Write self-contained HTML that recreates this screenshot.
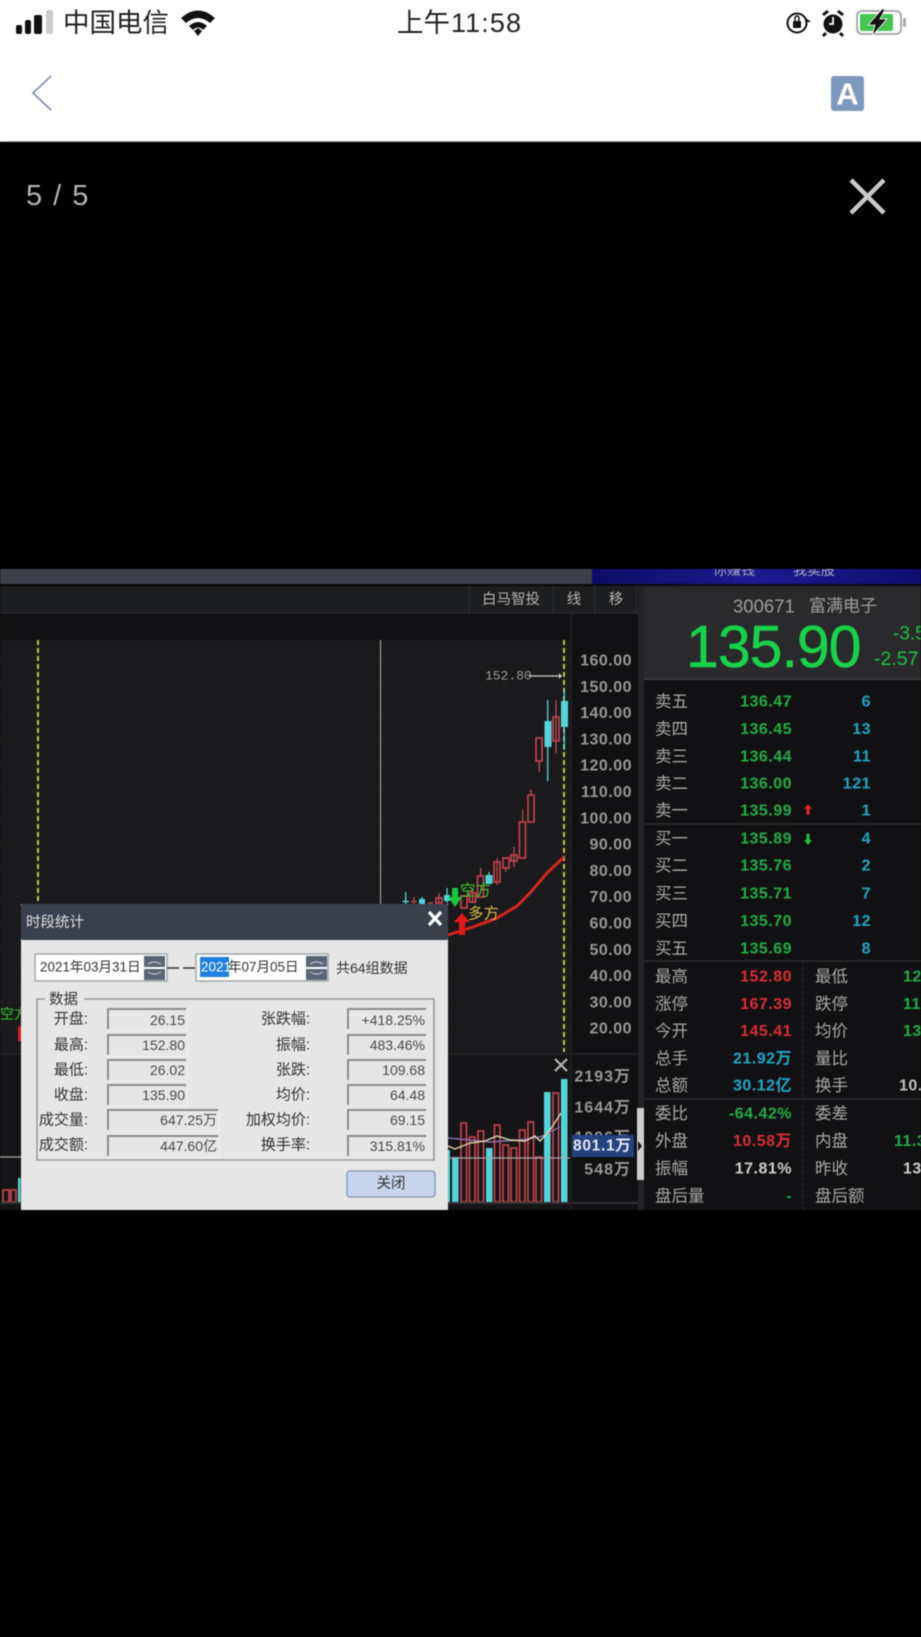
<!DOCTYPE html>
<html lang="zh"><head><meta charset="utf-8"><title>5 / 5</title>
<style>
html,body{margin:0;padding:0;background:linear-gradient(#fff 142px,#000 142px);width:921px;height:1637px;overflow:hidden}
svg{display:block;position:absolute;left:0;top:0;filter:blur(.4px)}
text{font-family:"Liberation Sans","Noto Sans CJK SC",sans-serif;dominant-baseline:central}
.cn{font-size:16.5px;fill:#a8a8a8}
.n{font-size:16px;font-weight:bold;letter-spacing:.5px;text-anchor:end}
.g{fill:#1fae45}.b{fill:#20a6c6}.r{fill:#d92c36}
.ax{font-size:16px;font-weight:bold;letter-spacing:.5px;text-anchor:end;fill:#979797}
.av{font-size:16px;font-weight:bold;letter-spacing:1px;text-anchor:end;fill:#979797}
.dl{font-size:15px;fill:#333;text-anchor:end}
.dv{font-size:14px;fill:#4a4a4a;text-anchor:end}
.rb{fill:none;stroke:#b9404a;stroke-width:1.8}
.w{stroke:#b5454c;stroke-width:1.4}
.tb{fill:#52d4d8}
.tw{stroke:#52d4d8;stroke-width:1.3}
</style></head><body>
<svg width="921" height="1637" viewBox="0 0 921 1637" xmlns="http://www.w3.org/2000/svg">
<defs><linearGradient id="bl" x1="0" x2="1" y1="0" y2="0"><stop offset="0" stop-color="#0c0c66"/><stop offset=".5" stop-color="#1c1c90"/><stop offset="1" stop-color="#0e0e70"/></linearGradient>
<clipPath id="top"><rect x="592" y="569" width="329" height="15"/></clipPath></defs>
<rect width="921" height="1637" fill="#000"/>
<!-- header -->
<rect width="921" height="142" fill="#fff"/>
<rect y="141" width="921" height="1" fill="#aaa"/>
<rect x="16" y="25" width="6" height="9" rx="2" fill="#111"/>
<rect x="25" y="20" width="6" height="14" rx="2" fill="#111"/>
<rect x="34" y="15" width="8" height="19" rx="2" fill="#111"/>
<rect x="46" y="10" width="7" height="24" rx="2" fill="#ccc"/>
<text x="63" y="23" style="font-size:26.5px;fill:#222">中国电信</text>
<path d="M181 18 Q198 3 215 18 L210 23 Q198 13 186 23Z M189 26 Q198 18 207 26 L203 30 Q198 25 193 30Z M194 31 L198 28 L202 31 L198 36Z" fill="#111"/>
<text x="397" y="23" style="font-size:26.5px;fill:#222">上午</text>
<text x="451" y="23" style="font-size:27px;fill:#222;letter-spacing:1.1px">11:58</text>
<circle cx="797" cy="23" r="9.5" fill="none" stroke="#111" stroke-width="2"/>
<rect x="793" y="21" width="8" height="7" rx="1" fill="#111"/><path d="M795 21v-3a2 2 0 0 1 4 0v3" fill="none" stroke="#111" stroke-width="1.5"/>
<path d="M806 18l5 4h-6z" fill="#111"/>
<circle cx="833" cy="24" r="9.5" fill="#111"/>
<path d="M823 15l5-4M843 15l-5-4M826 33l-3 3M840 33l3 3" stroke="#111" stroke-width="3"/>
<path d="M833 17v7h-4" stroke="#fff" stroke-width="1.8" fill="none"/>
<rect x="857" y="11" width="44" height="23" rx="5" fill="#fff" stroke="#aaa" stroke-width="2"/>
<rect x="860" y="14" width="33" height="17" rx="2" fill="#45c552"/>
<rect x="903" y="18" width="3" height="9" rx="1.5" fill="#aaa"/>
<path d="M882 9L868 25h7l-3 11 15-17h-7l5-10z" fill="#111" stroke="#fff" stroke-width=".8"/>
<path d="M51 76L33 93L51 110" fill="none" stroke="#8791b5" stroke-width="1.8"/>
<rect x="831" y="76" width="33" height="35" rx="3" fill="#7f98be"/>
<text x="847.5" y="94" style="font-size:31px;font-weight:bold;fill:#fff;text-anchor:middle">A</text>
<!-- viewer -->
<text x="26" y="196" style="font-size:29px;fill:#b4b4b4;letter-spacing:1.5px">5 / 5</text>
<path d="M851 180L884 213M884 180L851 213" stroke="#c9c9c9" stroke-width="4.5"/>
<!-- image base -->
<rect y="569" width="921" height="641" fill="#111113"/>
<rect y="569" width="592" height="15" fill="#3b4049"/>
<rect x="592" y="569" width="329" height="15" fill="url(#bl)"/>
<g clip-path="url(#top)"><text x="713" y="570" style="font-size:14px;fill:#a8a8c0">你赚钱</text><text x="793" y="570" style="font-size:14px;fill:#a8a8c0">我卖股</text></g>
<rect y="584" width="921" height="2" fill="#0a0a0a"/>
<rect y="586" width="638" height="27" fill="#1c1d1f"/>
<path d="M469 586v27M553 586v27M595 586v27M636 586v27M0 613H638" stroke="#2a2b2e" stroke-width="1.2"/>
<text x="482" y="600" style="font-size:14.5px;fill:#b5b5b5">白马智投</text>
<text x="574" y="600" style="font-size:14.5px;fill:#b5b5b5;text-anchor:middle">线</text>
<text x="616" y="600" style="font-size:14.5px;fill:#b5b5b5;text-anchor:middle">移</text>
<!-- chart -->
<rect y="640" width="570" height="414" fill="#1a1a1c"/>
<g stroke="#2a2a2c" stroke-width="1" stroke-dasharray="2 6">
<path d="M0 660H570M0 686.3H570M0 712.6H570M0 738.9H570M0 765.2H570M0 791.5H570M0 817.8H570M0 844.1H570M0 870.4H570M0 896.7H570M0 923H570M0 949.3H570M0 975.6H570M0 1001.9H570M0 1028.2H570"/>
</g>
<rect y="1054" width="570" height="156" fill="#151517"/>
<path d="M0 1054H640" stroke="#262628" stroke-width="1.5"/>
<path d="M38 640V905" stroke="#d9cf63" stroke-width="1.8" stroke-dasharray="5 3"/>
<path d="M564 640V1052" stroke="#d9cf63" stroke-width="1.8" stroke-dasharray="5 3"/>
<path d="M380.5 640V905" stroke="#a0a0a0" stroke-width="1.2"/>
<text x="485" y="676" style="font-family:'Liberation Mono',monospace;font-size:13px;fill:#9a9a9a">152.80</text>
<path d="M529 676H561" stroke="#ccc" stroke-width="1.2"/><path d="M559 673l3 3-3 3z" fill="#ccc"/>
<!-- candles -->
<path class="tw" d="M564.3 690V750M547.7 700V781M489 872V876M447 888V903M422 897V905M405.7 892V904"/>
<path class="w" d="M556 700V753M539.3 761V772M531 790V795M522.7 809V822M514 847V867M506 868V872M497 858V885M480.7 868V876M472.7 888V902M439 893V903M414 897V905"/>
<rect class="tb" x="561" y="701" width="7" height="26"/>
<rect class="tb" x="544.5" y="721" width="7" height="26"/>
<rect class="tb" x="485.5" y="875" width="7" height="9"/>
<rect class="tb" x="444" y="895" width="6" height="6"/>
<rect class="tb" x="419" y="899" width="6" height="5"/>
<path class="tw" d="M402.5 901.5H409"/>
<rect class="rb" x="553" y="717" width="6" height="24"/>
<rect class="rb" x="536" y="738" width="6" height="23"/>
<rect class="rb" x="528" y="795" width="6" height="27"/>
<rect class="rb" x="519.5" y="822" width="6" height="36"/>
<rect class="rb" x="511" y="855" width="6" height="6"/>
<rect class="rb" x="503" y="858" width="6" height="10"/>
<rect class="rb" x="494" y="862" width="6" height="20"/>
<rect class="rb" x="477.5" y="876" width="6" height="21"/>
<rect class="rb" x="469.5" y="893" width="6" height="9"/>
<rect class="rb" x="461" y="896" width="6" height="12"/>
<rect class="rb" x="436" y="898" width="6" height="5"/>
<path class="w" d="M411 901.5H417M428 903H433"/>
<path d="M448 935L473 927L497 918L517 906L530 893L547 873L564 857" fill="none" stroke="#d6251f" stroke-width="3"/>
<path d="M452 888h6v9h4l-7 10-7-10h4z" fill="#16c93a"/>
<text x="460" y="891" style="font-size:15.5px;fill:#46c62c">空方</text>
<text x="468" y="914" style="font-size:15.5px;fill:#d8bc40">多方</text>
<path d="M462 913l8 9h-5v13h-6v-13h-5z" fill="#e01a1a"/>
<!-- volume -->
<g class="tb">
<rect x="448" y="1150" width="2" height="52"/>
<rect x="452" y="1157" width="6.5" height="45"/>
<rect x="486" y="1148" width="6.5" height="54"/>
<rect x="544" y="1092" width="6.5" height="110"/>
<rect x="561" y="1079" width="6.5" height="123"/>
<rect x="18" y="1178" width="2.5" height="24"/>
</g>
<g class="rb">
<rect x="461" y="1123" width="5.5" height="79"/>
<rect x="469.5" y="1137" width="5.5" height="65"/>
<rect x="478" y="1131" width="5.5" height="71"/>
<rect x="494.5" y="1125" width="5.5" height="77"/>
<rect x="503" y="1145" width="5.5" height="57"/>
<rect x="511" y="1148" width="5.5" height="54"/>
<rect x="519.5" y="1130" width="5.5" height="72"/>
<rect x="528" y="1122" width="5.5" height="80"/>
<rect x="536" y="1157" width="5.5" height="45"/>
<rect x="553" y="1093" width="5.5" height="109"/>
<rect x="3" y="1190" width="6" height="12"/>
<rect x="11" y="1190" width="5" height="12"/>
</g>
<path d="M0 1157H21M448 1158H570" stroke="#a8a8a8" stroke-width="1.2"/>
<path d="M448 1138L470 1140L490 1142L520 1140L540 1137L560 1127" fill="none" stroke="#8e6fa8" stroke-width="1.4"/>
<path d="M448 1146L455 1149L470 1143L485 1141L497 1136L510 1140L525 1141L535 1136L540 1141L550 1130L561 1113" fill="none" stroke="#ded9b0" stroke-width="1.4"/>
<path d="M0 1203H640" stroke="#333335" stroke-width="2"/>
<path d="M555 1059L567 1071M567 1059L555 1071" stroke="#b5b5b5" stroke-width="2.2"/>
<!-- axis -->
<rect x="570" y="613" width="2" height="597" fill="#1e1e20"/>
<rect x="638" y="586" width="6" height="624" fill="#232325"/>
<text class="ax" x="632" y="661">160.00</text><text class="ax" x="632" y="687.3">150.00</text><text class="ax" x="632" y="713.6">140.00</text><text class="ax" x="632" y="739.9">130.00</text><text class="ax" x="632" y="766.2">120.00</text><text class="ax" x="632" y="792.5">110.00</text><text class="ax" x="632" y="818.8">100.00</text><text class="ax" x="632" y="845.1">90.00</text><text class="ax" x="632" y="871.4">80.00</text><text class="ax" x="632" y="897.7">70.00</text><text class="ax" x="632" y="924">60.00</text><text class="ax" x="632" y="950.3">50.00</text><text class="ax" x="632" y="976.6">40.00</text><text class="ax" x="632" y="1002.9">30.00</text><text class="ax" x="632" y="1029.2">20.00</text>
<text class="av" x="631" y="1077">2193万</text><text class="av" x="631" y="1108">1644万</text><text class="av" x="631" y="1138">1096万</text><text class="av" x="631" y="1170">548万</text>
<rect x="572" y="1135" width="62" height="22" fill="#24427f"/>
<text x="573" y="1146" style="font-size:15.5px;font-weight:bold;fill:#e8e8f0;letter-spacing:.7px">801.1万</text>
<rect x="637" y="1108" width="7" height="72" fill="#cfcfcf"/>
<path d="M638 1141l4 5-4 5z" fill="#111"/>
<!-- right panel -->
<rect x="644" y="586" width="277" height="92" fill="#2a2a2c"/>
<rect x="644" y="678" width="277" height="2" fill="#3a3a3c"/>
<rect x="644" y="680" width="277" height="530" fill="#111113"/>
<text x="733" y="606" style="font-size:18.5px;fill:#9e9e9e">300671</text>
<text x="809" y="606" style="font-size:17px;fill:#9e9e9e">富满电子</text>
<text x="686" y="647" style="font-size:59px;fill:#18d24b;letter-spacing:-1px;stroke:#18d24b;stroke-width:.5">135.90</text>
<text x="893" y="634" style="font-size:19px;fill:#1fbf44">-3.5</text>
<text x="874" y="659" style="font-size:19.5px;fill:#1fbf44">-2.57</text>
<path d="M644 824H921M644 961H921M644 1099H921" stroke="#2e2e30" stroke-width="1.5"/>
<path d="M803 961V1210" stroke="#29292b" stroke-dasharray="3 3" stroke-width="1.2"/>
<text class="cn" x="655" y="702">卖五</text><text class="cn" x="655" y="729.5">卖四</text><text class="cn" x="655" y="757">卖三</text><text class="cn" x="655" y="784">卖二</text><text class="cn" x="655" y="811">卖一</text>
<text class="cn" x="655" y="839">买一</text><text class="cn" x="655" y="866">买二</text><text class="cn" x="655" y="894">买三</text><text class="cn" x="655" y="921.5">买四</text><text class="cn" x="655" y="949">买五</text>
<text class="cn" x="655" y="977">最高</text><text class="cn" x="655" y="1004.5">涨停</text><text class="cn" x="655" y="1031.500">今开</text><text class="cn" x="655" y="1059">总手</text><text class="cn" x="655" y="1086">总额</text>
<text class="cn" x="655" y="1114">委比</text><text class="cn" x="655" y="1141.5">外盘</text><text class="cn" x="655" y="1169">振幅</text><text class="cn" x="655" y="1196.5">盘后量</text>
<text class="cn" x="815" y="977">最低</text><text class="cn" x="815" y="1004.5">跌停</text><text class="cn" x="815" y="1031.500">均价</text><text class="cn" x="815" y="1059">量比</text><text class="cn" x="815" y="1086">换手</text>
<text class="cn" x="815" y="1114">委差</text><text class="cn" x="815" y="1141.5">内盘</text><text class="cn" x="815" y="1169">昨收</text><text class="cn" x="815" y="1196.5">盘后额</text>
<text class="n g" x="792" y="702">136.47</text><text class="n g" x="792" y="729.5">136.45</text><text class="n g" x="792" y="757">136.44</text><text class="n g" x="792" y="784">136.00</text><text class="n g" x="792" y="811">135.99</text>
<text class="n g" x="792" y="839">135.89</text><text class="n g" x="792" y="866">135.76</text><text class="n g" x="792" y="894">135.71</text><text class="n g" x="792" y="921.5">135.70</text><text class="n g" x="792" y="949">135.69</text>
<text class="n b" x="871" y="702">6</text><text class="n b" x="871" y="729.5">13</text><text class="n b" x="871" y="757">11</text><text class="n b" x="871" y="784">121</text><text class="n b" x="871" y="811">1</text>
<text class="n b" x="871" y="839">4</text><text class="n b" x="871" y="866">2</text><text class="n b" x="871" y="894">7</text><text class="n b" x="871" y="921.5">12</text><text class="n b" x="871" y="949">8</text>
<path d="M808 804l4 5h-2.500v6h-3v-6h-2.500z" fill="#e81f28"/>
<path d="M808 845l-4-5h2.500v-6h3v6h2.500z" fill="#1ec63f"/>
<text class="n r" x="792" y="977">152.80</text><text class="n r" x="792" y="1004.5">167.39</text><text class="n r" x="792" y="1031.5">145.41</text>
<text class="n b" x="792" y="1059">21.92万</text><text class="n b" x="792" y="1086">30.12亿</text>
<text class="n g" x="792" y="1114">-64.42%</text><text class="n r" x="792" y="1141.5">10.58万</text><text class="n" style="fill:#cfcfcf" x="792" y="1169">17.81%</text>
<text class="n g" x="792" y="1196.5">-</text>
<g style="font-size:16px;font-weight:bold;letter-spacing:.5px">
<text x="903" y="977" style="fill:#1fae45">12</text><text x="903" y="1004.5" style="fill:#1fae45">11</text><text x="903" y="1031.5" style="fill:#1fae45">13</text>
<text x="899" y="1086" style="fill:#c0c0c0">10.</text><text x="894" y="1141.5" style="fill:#1fae45">11.3</text><text x="903" y="1169" style="fill:#cfcfcf">13</text>
</g>
<!-- left marks -->
<text x="0" y="1014" style="font-size:14px;fill:#39c02c">空方</text>
<path d="M19 1025l3 4v12h-4v-12z" fill="#e01a1a"/>
<!-- dialog -->
<rect x="21" y="904" width="427" height="306" fill="#e6e6e6"/>
<rect x="21" y="904" width="427" height="36" rx="2" fill="#3a404b"/>
<text x="26" y="923" style="font-size:14.5px;fill:#dedede">时段统计</text>
<path d="M429 912L441 925M441 912L429 925" stroke="#fff" stroke-width="3.2"/>
<rect x="35" y="954" width="132" height="27" fill="#fff" stroke="#a0a4aa" stroke-width="1.5"/>
<text x="40" y="967" style="font-size:13.5px;fill:#333">2021年03月31日</text>
<rect x="144" y="956" width="21" height="11" fill="#5a6574"/><rect x="144" y="969" width="21" height="11" fill="#5a6574"/>
<path d="M148 964q6.500-4 13 0M148 972q6.500 4 13 0" stroke="#cfd6e0" fill="none"/>
<path d="M167 968h12M183 968h12" stroke="#333" stroke-width="1.5"/>
<rect x="196" y="954" width="132" height="27" fill="#fff" stroke="#a0a4aa" stroke-width="1.5"/>
<rect x="200" y="957" width="29" height="20" fill="#1f7fe0"/>
<text x="201" y="967" style="font-size:13.5px;fill:#fff">2021</text>
<text x="228" y="967" style="font-size:13.5px;fill:#333">年07月05日</text>
<rect x="306" y="956" width="21" height="11" fill="#5a6574"/><rect x="306" y="969" width="21" height="11" fill="#5a6574"/>
<path d="M310 964q6.500-4 13 0M310 972q6.500 4 13 0" stroke="#cfd6e0" fill="none"/>
<text x="336" y="968" style="font-size:14px;fill:#333">共64组数据</text>
<path d="M45 999H37V1160H434V999H84" fill="none" stroke="#9a9a9a" stroke-width="1.6"/>
<text x="49" y="1000" style="font-size:14.5px;fill:#333">数据</text>
<text class="dl" x="88" y="1019">开盘:</text><text class="dl" x="88" y="1045">最高:</text><text class="dl" x="88" y="1070">最低:</text><text class="dl" x="88" y="1095">收盘:</text><text class="dl" x="88" y="1120">成交量:</text><text class="dl" x="88" y="1145">成交额:</text>
<text class="dl" x="310" y="1019">张跌幅:</text><text class="dl" x="310" y="1045">振幅:</text><text class="dl" x="310" y="1070">张跌:</text><text class="dl" x="310" y="1095">均价:</text><text class="dl" x="310" y="1120">加权均价:</text><text class="dl" x="310" y="1145">换手率:</text>
<g stroke="#8c8c8c" stroke-width="2" fill="none">
<path d="M108 1029V1009H186M108 1055V1035H186M108 1080V1060H186M108 1105V1085H186M108 1130V1110H218M108 1156V1136H218"/>
<path d="M348 1029V1009H426M348 1055V1035H426M348 1080V1060H426M348 1105V1085H426M348 1130V1110H426M348 1156V1136H426"/>
</g>
<g fill="#f3f3f3">
<path d="M108 1030h79v-20h1v21h-80zM108 1056h79v-20h1v21h-80zM108 1081h79v-20h1v21h-80zM108 1106h79v-20h1v21h-80zM108 1131h111v-20h1v21h-112zM108 1157h111v-20h1v21h-112z"/>
</g>
<text class="dv" x="185" y="1020">26.15</text><text class="dv" x="185" y="1045">152.80</text><text class="dv" x="185" y="1070">26.02</text><text class="dv" x="185" y="1095">135.90</text><text class="dv" x="217" y="1120">647.25万</text><text class="dv" x="217" y="1146">447.60亿</text>
<text class="dv" x="425" y="1020">+418.25%</text><text class="dv" x="425" y="1045">483.46%</text><text class="dv" x="425" y="1070">109.68</text><text class="dv" x="425" y="1095">64.48</text><text class="dv" x="425" y="1120">69.15</text><text class="dv" x="425" y="1146">315.81%</text>
<rect x="347" y="1171" width="88" height="26" rx="3" fill="#c6d5eb" stroke="#8d9fba" stroke-width="1.5"/>
<text x="391" y="1184" style="font-size:14.5px;fill:#333;text-anchor:middle">关闭</text>
</svg>
</body></html>
